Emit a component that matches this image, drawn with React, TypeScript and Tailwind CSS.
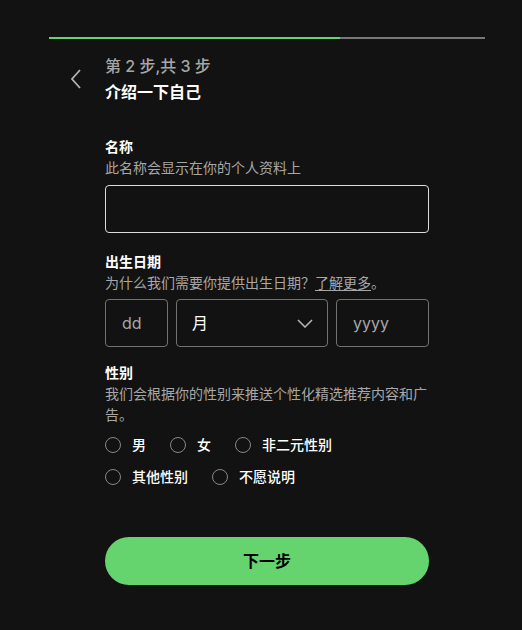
import { useState } from "react";

const genders = [
  ["男", "女", "非二元性别"],
  ["其他性别", "不愿说明"],
];

function Radio({ label }: { label: string }) {
  return (
    <label className="flex items-center gap-[11px] cursor-pointer">
      <span className="w-4 h-4 rounded-full border border-[#878787]" />
      <span className="text-sm font-medium text-white">{label}</span>
    </label>
  );
}

export default function App() {
  const [name, setName] = useState("");

  return (
    <div className="min-h-screen w-full bg-[#121212] pb-10 font-['Inter','Noto_Sans_CJK_SC',sans-serif]">
      <div className="pt-[37px] pl-[49px]">
        <div className="flex w-[436px] h-[2px] bg-[#777777]">
          <div className="w-[291px] h-full bg-[#65d46e]" />
        </div>
      </div>

      <div className="flex items-center mt-[14px] pl-[64px]">
        <button className="flex items-center justify-center w-6 h-8 mr-[17px] text-[#b3b3b3]">
          <svg width="12" height="20" viewBox="0 0 12 20" fill="none">
            <path d="M10 1 L2 10 L10 19" stroke="currentColor" strokeWidth="1.8" />
          </svg>
        </button>
        <div>
          <p className="text-base leading-[26px] text-[#a7a7a7] font-medium">第 2 步,共 3 步</p>
          <h1 className="text-base leading-[26px] text-white font-bold">介绍一下自己</h1>
        </div>
      </div>

      <div className="w-[324px] ml-[105px] mt-[31px]">
        <p className="text-sm leading-[21px] font-bold text-white">名称</p>
        <p className="text-sm leading-[21px] text-[#a7a7a7]">此名称会显示在你的个人资料上</p>
        <input
          value={name}
          onChange={(e) => setName(e.target.value)}
          className="mt-[7px] block w-full h-12 rounded border border-[#dcdcdc] bg-transparent px-4 text-white outline-none"
        />

        <p className="mt-[18px] text-sm leading-[21px] font-bold text-white">出生日期</p>
        <p className="text-sm leading-[21px] text-[#a7a7a7]">
          为什么我们需要你提供出生日期？
          <span className="underline underline-offset-2">了解更多</span>。
        </p>
        <div className="flex gap-2 mt-[6px]">
          <div className="w-[63px] h-12 rounded border border-[#727272] flex items-center px-4 text-base text-[#a7a7a7]">
            dd
          </div>
          <div className="w-[152px] h-12 rounded border border-[#727272] flex items-center justify-between pl-[15px] pr-[14px] text-base text-white">
            <span>月</span>
            <svg width="16" height="9" viewBox="0 0 16 9" fill="none" className="text-[#b3b3b3]">
              <path d="M1 1 L8 8 L15 1" stroke="currentColor" strokeWidth="1.6" />
            </svg>
          </div>
          <div className="flex-1 h-12 rounded border border-[#727272] flex items-center px-4 text-base text-[#a7a7a7]">
            yyyy
          </div>
        </div>

        <p className="mt-4 text-sm leading-5 font-bold text-white">性别</p>
        <p className="text-sm leading-[21px] text-[#a7a7a7]">我们会根据你的性别来推送个性化精选推荐内容和广告。</p>
        <div className="mt-[10px] flex flex-col gap-3">
          {genders.map((row, i) => (
            <div key={i} className="flex items-center gap-6 h-5">
              {row.map((g) => (
                <Radio key={g} label={g} />
              ))}
            </div>
          ))}
        </div>

        <button className="mt-[50px] w-full h-12 rounded-full bg-[#65d46e] text-base font-bold text-black">
          下一步
        </button>
      </div>
    </div>
  );
}
